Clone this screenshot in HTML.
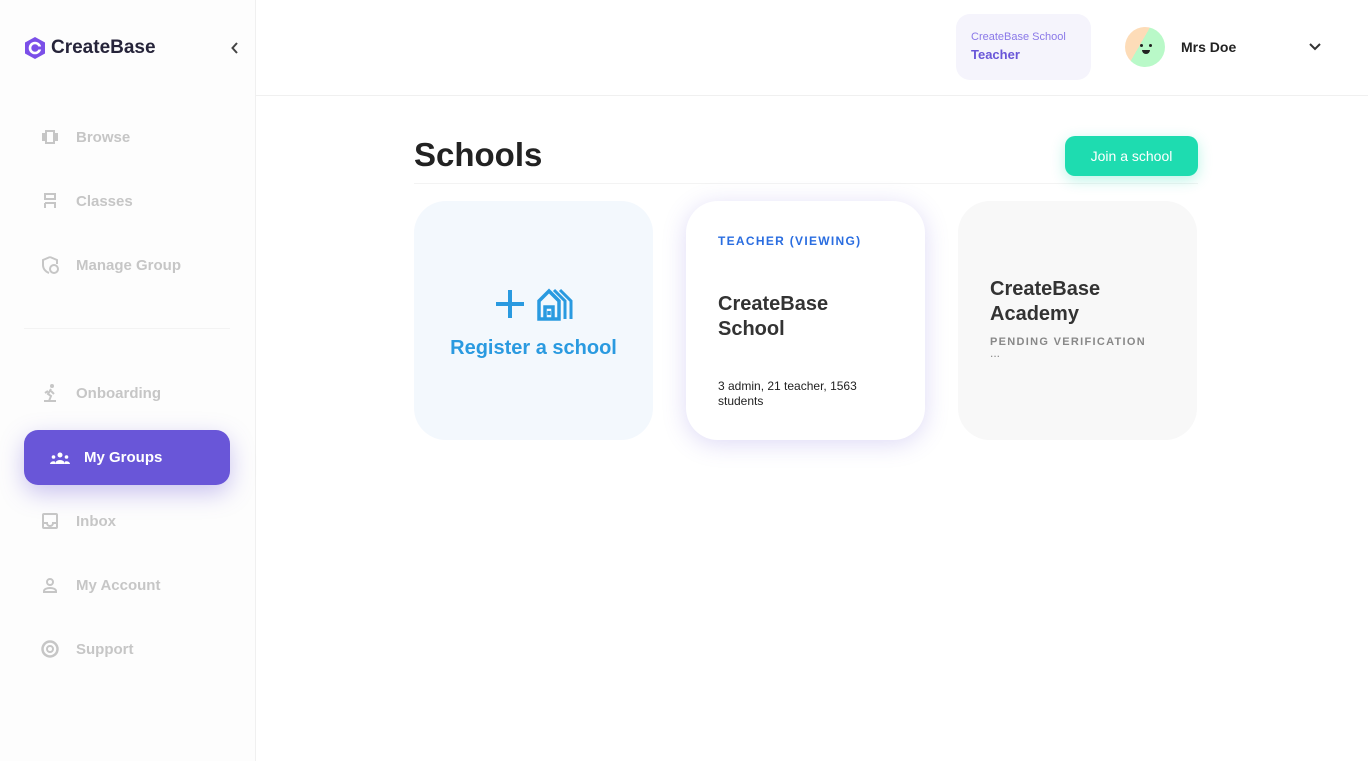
<!DOCTYPE html>
<html><head><style>
*{box-sizing:border-box;margin:0;padding:0}
body{width:1368px;height:761px;overflow:hidden;font-family:"Liberation Sans",sans-serif;background:#fff;position:relative}
.side{position:absolute;left:0;top:0;width:256px;height:761px;background:#fdfdfd;border-right:1px solid #f0f0f0}
.logo{position:absolute;left:24px;top:36px;display:flex;align-items:center;font-weight:bold;font-size:19px;color:#26243a}
.nav{position:absolute;left:40px;display:flex;align-items:center;color:#c6c6c6;font-size:15px;font-weight:bold}
.nav svg{width:20px;height:20px;margin-right:16px}
.active{position:absolute;left:24px;top:430px;width:206px;height:55px;background:#6956d8;border-radius:14px;box-shadow:0 8px 24px rgba(105,86,216,.35);display:flex;align-items:center;padding-left:26px;color:#fff;font-weight:bold;font-size:15px}
.hdr{position:absolute;left:256px;top:0;right:0;height:96px;border-bottom:1px solid #f0f0f0}
.card{position:absolute;top:201px;width:239px;height:239px;border-radius:32px}
</style></head><body>
<div class="side">
 <div class="logo"><svg width="22" height="24" viewBox="0 0 22 24"><polygon points="11,1 21,6.5 21,17.5 11,23 1,17.5 1,6.5" fill="#7b4fe8"/><circle cx="11" cy="12" r="5" fill="none" stroke="#fff" stroke-width="2.6"/><rect x="13" y="10.5" width="6" height="3" fill="#7b4fe8"/></svg><span style="margin-left:5px">CreateBase</span></div>
 <svg style="position:absolute;left:231px;top:42px" width="8" height="12" viewBox="0 0 8 12"><path d="M6 1L1.5 6 6 11" fill="none" stroke="#444" stroke-width="2"/></svg>
 <div class="nav" style="top:127px"><svg viewBox="0 0 20 20"><rect x="6" y="4" width="8" height="12" fill="none" stroke="#c6c6c6" stroke-width="2"/><rect x="2" y="6" width="3" height="8" fill="#c6c6c6"/><rect x="15" y="6" width="3" height="8" fill="#c6c6c6"/></svg>Browse</div>
 <div class="nav" style="top:191px"><svg viewBox="0 0 20 20"><path d="M5 3h10v5H5zM5 12h10v5M5 17v-5" fill="none" stroke="#c6c6c6" stroke-width="2"/></svg>Classes</div>
 <div class="nav" style="top:255px"><svg viewBox="0 0 20 20"><path d="M10 2l7 3v4M10 2L3 5v5c0 4 3 7 6 8" fill="none" stroke="#c6c6c6" stroke-width="2"/><circle cx="14" cy="14" r="4" fill="none" stroke="#c6c6c6" stroke-width="2"/></svg>Manage Group</div>
 <div style="position:absolute;left:24px;top:328px;width:206px;height:1px;background:#f3f3f3"></div>
 <div class="nav" style="top:383px"><svg viewBox="0 0 20 20"><circle cx="12" cy="3" r="2" fill="#c6c6c6"/><path d="M11 6l-3 5 3 2-2 5M8 8l-3 2M11 8l3 3M4 18h12" fill="none" stroke="#c6c6c6" stroke-width="2"/></svg>Onboarding</div>
 <div class="active"><svg width="20" height="14" viewBox="0 0 20 14" style="margin-right:14px"><circle cx="10" cy="4" r="2.5" fill="#fff"/><circle cx="3.5" cy="6" r="1.8" fill="#fff"/><circle cx="16.5" cy="6" r="1.8" fill="#fff"/><path d="M5 13a5 4 0 0 1 10 0zM0 13a3.5 3 0 0 1 5-2.5V13zM20 13a3.5 3 0 0 0-5-2.5V13z" fill="#fff"/></svg>My Groups</div>
 <div class="nav" style="top:511px"><svg viewBox="0 0 20 20"><rect x="3" y="3" width="14" height="14" rx="1" fill="none" stroke="#c6c6c6" stroke-width="2"/><path d="M3 12h4a3 3 0 0 0 6 0h4" fill="none" stroke="#c6c6c6" stroke-width="2"/></svg>Inbox</div>
 <div class="nav" style="top:575px"><svg viewBox="0 0 20 20"><circle cx="10" cy="7" r="3" fill="none" stroke="#c6c6c6" stroke-width="2"/><path d="M4 17v-1c0-2 3-3 6-3s6 1 6 3v1z" fill="none" stroke="#c6c6c6" stroke-width="2"/></svg>My Account</div>
 <div class="nav" style="top:639px"><svg viewBox="0 0 20 20"><circle cx="10" cy="10" r="7.5" fill="none" stroke="#c6c6c6" stroke-width="2.5"/><circle cx="10" cy="10" r="3" fill="none" stroke="#c6c6c6" stroke-width="2"/></svg>Support</div>
</div>
<div class="hdr">
 <div style="position:absolute;left:700px;top:14px;width:135px;height:66px;background:#f5f4fc;border-radius:14px;padding:17px 0 0 15px">
  <div style="font-size:11px;color:#8a78e8">CreateBase School</div>
  <div style="font-size:13px;color:#6956d8;font-weight:bold;margin-top:4px">Teacher</div>
 </div>
 <div style="position:absolute;left:869px;top:27px;width:40px;height:40px;border-radius:50%;background:linear-gradient(120deg,#fddcb8 40%,#b9f9c8 40%)"><div style="position:absolute;left:15px;top:17px;width:3px;height:3px;background:#222;border-radius:50%"></div><div style="position:absolute;left:24px;top:17px;width:3px;height:3px;background:#222;border-radius:50%"></div><div style="position:absolute;left:17px;top:23px;width:8px;height:4px;background:#222;border-radius:0 0 4px 4px"></div></div>
 <div style="position:absolute;left:925px;top:39px;font-size:14px;font-weight:bold;color:#222">Mrs Doe</div>
 <svg style="position:absolute;left:1053px;top:43px" width="12" height="8" viewBox="0 0 12 8"><path d="M1 1l5 5 5-5" fill="none" stroke="#333" stroke-width="2"/></svg>
</div>
<div style="position:absolute;left:414px;top:136px;font-size:33px;font-weight:bold;color:#222">Schools</div>
<div style="position:absolute;left:414px;top:183px;width:784px;height:1px;background:#f3f3f3"></div>
<div style="position:absolute;left:1065px;top:136px;width:133px;height:40px;background:#1edcb0;border-radius:10px;color:#fff;font-size:14px;text-align:center;line-height:40px;box-shadow:0 4px 14px rgba(30,220,176,.3)">Join a school</div>
<div class="card" style="left:414px;background:#f3f8fd;text-align:center">
 <svg style="position:absolute;left:80px;top:86px" width="86" height="34" viewBox="0 0 86 34"><path d="M2 17h28M16 3v28" stroke="#2a9ae0" stroke-width="4"/><path d="M45 32V14l10-10 10 10v18zM51 32V20h8v12M55 24v4" fill="none" stroke="#2a9ae0" stroke-width="3.5"/><path d="M60 3l11 11v18M66 3l11 11v18" fill="none" stroke="#2a9ae0" stroke-width="3"/></svg>
 <div style="position:absolute;left:0;right:0;top:136px;font-size:20px;font-weight:bold;color:#2a9ae0">Register a school</div>
</div>
<div class="card" style="left:686px;background:#fff;box-shadow:0 4px 24px rgba(105,86,216,.22);padding:33px 32px">
 <div style="font-size:12px;font-weight:bold;letter-spacing:1.3px;color:#2a6de0">TEACHER (VIEWING)</div>
 <div style="font-size:20px;font-weight:bold;color:#333;margin-top:44px;line-height:25px">CreateBase<br>School</div>
 <div style="font-size:12px;color:#222;margin-top:37px;line-height:15px">3 admin, 21 teacher, 1563<br>students</div>
</div>
<div class="card" style="left:958px;background:#f8f8f8;padding:32px">
 <div style="font-size:20px;font-weight:bold;color:#333;margin-top:44px;line-height:25px">CreateBase<br>Academy</div>
 <div style="font-size:11px;font-weight:bold;letter-spacing:1.3px;color:#888;margin-top:9px">PENDING VERIFICATION</div>
 <div style="font-size:12px;color:#888;line-height:10px">...</div>
</div>
</body></html>
